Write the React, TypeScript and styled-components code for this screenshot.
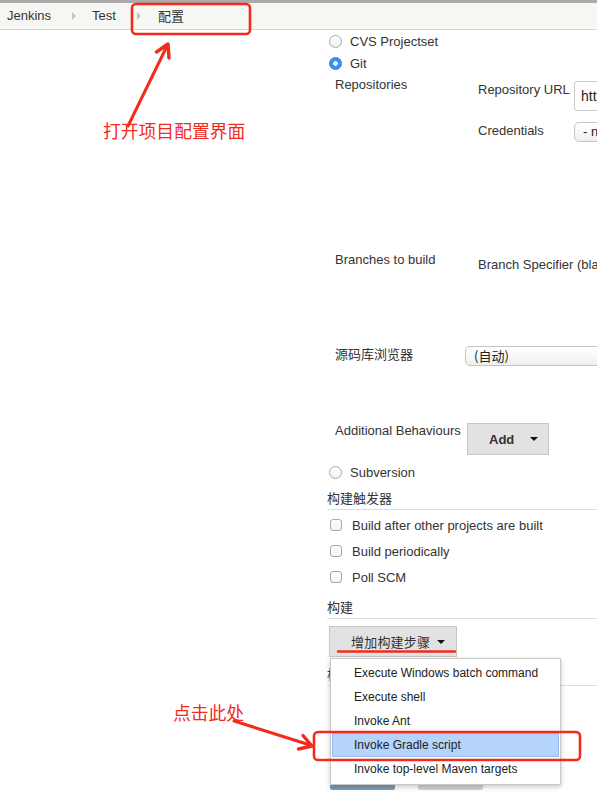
import React from 'react';
import styled, { createGlobalStyle, css } from 'styled-components';

const GlobalStyle = createGlobalStyle`
  html, body {
    margin: 0;
    padding: 0;
    background: #fff;
    overflow: hidden;
  }
  body {
    font-family: 'Liberation Sans', Arial, 'Noto Sans CJK SC', sans-serif;
    font-size: 13px;
    color: #333;
  }
`;

const RED = '#f22b1c';

const Page = styled.div`
  position: relative;
  width: 597px;
  height: 803px;
  overflow: hidden;
`;

const Breadcrumbs = styled.div`
  display: flex;
  align-items: center;
  height: 26px;
  padding-left: 7px;
  border-top: 3px solid #ababab;
  border-bottom: 1px solid #d4d5cf;
  background: #f6f7f2;
  line-height: 16px;
`;

const Crumb = styled.span<{ $cjk?: boolean }>`
  color: #333;
  margin-right: 21px;
  ${({ $cjk }) =>
    $cjk &&
    css`
      margin-left: 1px;
      font-family: 'Noto Sans CJK SC', sans-serif;
    `}
`;

const CrumbSep = styled.span`
  width: 0;
  height: 0;
  margin-right: 16px;
  border-top: 4px solid transparent;
  border-bottom: 4px solid transparent;
  border-left: 4px solid #c4c4c4;
`;

const Main = styled.div`
  display: flex;
`;

const Side = styled.div`
  flex: 0 0 327px;
`;

const Form = styled.div`
  flex: 0 0 600px;
`;

const RadioRow = styled.div<{ $mt?: number }>`
  display: flex;
  align-items: center;
  height: 22px;
  margin-top: ${({ $mt }) => $mt ?? 0}px;
  padding-left: 2px;
`;

const Radio = styled.span<{ $checked?: boolean }>`
  box-sizing: border-box;
  width: 13px;
  height: 13px;
  margin-right: 8px;
  border-radius: 50%;
  ${({ $checked }) =>
    $checked
      ? css`
          background: radial-gradient(circle, #fff 0 2px, #3b8ef5 2.6px);
          border: 1px solid #2f7fe6;
        `
      : css`
          background: linear-gradient(#fff, #f1f1f1);
          border: 1px solid #a9a9a9;
        `}
`;

const GitBlock = styled.div`
  padding-left: 8px;
`;

const SubRow = styled.div<{ $labelWidth: number; $height: number; $mt?: number }>`
  display: grid;
  grid-template-columns: ${({ $labelWidth }) => $labelWidth}px 1fr;
  align-items: start;
  height: ${({ $height }) => $height}px;
  margin-top: ${({ $mt }) => $mt ?? 0}px;
`;

const Label = styled.div<{ $pt?: number }>`
  padding-top: ${({ $pt }) => $pt ?? 0}px;
  line-height: 15px;
  white-space: nowrap;
  color: #333;
`;

const CjkLabel = styled(Label)`
  line-height: 16px;
  font-family: 'Noto Sans CJK SC', sans-serif;
`;

const FieldGrid = styled.div`
  display: grid;
  grid-template-columns: 96px 1fr;
  row-gap: 11px;
  margin-top: 7px;
`;

const TextInput = styled.div`
  box-sizing: border-box;
  width: 300px;
  height: 30px;
  padding: 0 6px;
  border: 1px solid #cacaca;
  border-radius: 3px;
  line-height: 28px;
  font-size: 14px;
  color: #222;
  white-space: nowrap;
  overflow: hidden;
`;

const SelectBox = styled.div<{ $cjk?: boolean }>`
  box-sizing: border-box;
  width: 300px;
  height: 20px;
  padding: 0 8px;
  border: 1px solid #c4c4c4;
  border-radius: 5px;
  background: linear-gradient(#ffffff, #f0f0f0);
  line-height: 18px;
  color: #222;
  white-space: nowrap;
  overflow: hidden;
  font-family: ${({ $cjk }) =>
    $cjk ? `'Noto Sans CJK SC', sans-serif` : `'Liberation Sans', Arial, sans-serif`};
`;

const DropButton = styled.div<{ $width: number; $height: number }>`
  box-sizing: border-box;
  display: flex;
  align-items: center;
  justify-content: space-between;
  width: ${({ $width }) => $width}px;
  height: ${({ $height }) => $height}px;
  border: 1px solid #c6c6c6;
  background: #e2e2e2;
  color: #333;
`;

const AddText = styled.span`
  margin-left: 21px;
  font-weight: bold;
`;

const StepText = styled.span`
  margin-left: 21px;
  font-family: 'Noto Sans CJK SC', sans-serif;
  letter-spacing: 0.2px;
`;

const Caret = styled.span<{ $mr: number }>`
  width: 0;
  height: 0;
  margin-right: ${({ $mr }) => $mr}px;
  border-left: 4px solid transparent;
  border-right: 4px solid transparent;
  border-top: 4px solid #111;
`;

const SectionHeader = styled.div<{ $mt?: number }>`
  margin-top: ${({ $mt }) => $mt ?? 0}px;
  padding: 7px 0 3px;
  border-bottom: 1px solid #dedede;
  line-height: 16px;
  font-family: 'Noto Sans CJK SC', sans-serif;
  color: #333;
`;

const CheckList = styled.div`
  margin-top: 2px;
  margin-bottom: 2px;
`;

const CheckRow = styled.div`
  display: flex;
  align-items: center;
  height: 26px;
  padding-left: 3px;
`;

const Checkbox = styled.span`
  box-sizing: border-box;
  width: 12px;
  height: 12px;
  margin-right: 10px;
  border: 1px solid #a9a9a9;
  border-radius: 3px;
  background: linear-gradient(#fff, #f2f2f2);
`;

const StepWrap = styled.div`
  position: relative;
  margin-top: 7px;
  margin-left: 2px;
`;

const Menu = styled.div`
  position: absolute;
  top: 32px;
  left: 1px;
  z-index: 2;
  box-sizing: border-box;
  width: 231px;
  height: 127px;
  padding: 2px 1px 0;
  border: 1px solid #c9c9c9;
  background: #fff;
  box-shadow: 0 2px 5px rgba(0, 0, 0, 0.22);
`;

const MenuItem = styled.div<{ $active?: boolean }>`
  box-sizing: border-box;
  height: 24px;
  padding-left: 22px;
  line-height: 24px;
  font-size: 12px;
  color: #222;
  white-space: nowrap;
  ${({ $active }) =>
    $active &&
    css`
      background: #b5d4fb;
      border: 1px solid #97bdf0;
      line-height: 22px;
      padding-left: 21px;
    `}
`;

const BottomBar = styled.div`
  display: flex;
  gap: 23px;
  margin-top: 75px;
  padding-left: 3px;
`;

const FormButton = styled.div<{ $primary?: boolean }>`
  width: 65px;
  height: 29px;
  border-radius: 2px;
  background: ${({ $primary }) => ($primary ? '#7e9bb1' : '#d4d4d4')};
`;

const Overlay = styled.svg`
  position: absolute;
  inset: 0;
  z-index: 5;
  pointer-events: none;
`;

const Note = styled.div<{ $x: number; $y: number }>`
  position: absolute;
  z-index: 6;
  left: ${({ $x }) => $x}px;
  top: ${({ $y }) => $y}px;
  font-family: 'Noto Sans CJK SC', sans-serif;
  font-size: 17.8px;
  line-height: 20px;
  color: ${RED};
  white-space: nowrap;
`;

const menuItems = [
  'Execute Windows batch command',
  'Execute shell',
  'Invoke Ant',
  'Invoke Gradle script',
  'Invoke top-level Maven targets',
];

const triggers = ['Build after other projects are built', 'Build periodically', 'Poll SCM'];

const App: React.FC = () => {
  return (
    <Page>
      <GlobalStyle />
      <Breadcrumbs>
        <Crumb>Jenkins</Crumb>
        <CrumbSep />
        <Crumb>Test</Crumb>
        <CrumbSep />
        <Crumb $cjk>配置</Crumb>
      </Breadcrumbs>

      <Main>
        <Side />
        <Form>
          <RadioRow>
            <Radio />
            CVS Projectset
          </RadioRow>
          <RadioRow>
            <Radio $checked />
            Git
          </RadioRow>

          <GitBlock>
            <SubRow $labelWidth={143} $height={178}>
              <Label $pt={3}>Repositories</Label>
              <FieldGrid>
                <Label $pt={1}>Repository URL</Label>
                <TextInput>https://github.com/</TextInput>
                <Label $pt={1}>Credentials</Label>
                <SelectBox>- none -</SelectBox>
              </FieldGrid>
            </SubRow>

            <SubRow $labelWidth={143} $height={94}>
              <Label>Branches to build</Label>
              <Label $pt={5}>Branch Specifier (blank for 'any')</Label>
            </SubRow>

            <SubRow $labelWidth={130} $height={20}>
              <CjkLabel>源码库浏览器</CjkLabel>
              <SelectBox $cjk>(自动)</SelectBox>
            </SubRow>

            <SubRow $labelWidth={132} $height={32} $mt={57}>
              <Label>Additional Behaviours</Label>
              <DropButton $width={82} $height={32}>
                <AddText>Add</AddText>
                <Caret $mr={10} />
              </DropButton>
            </SubRow>
          </GitBlock>

          <RadioRow $mt={6}>
            <Radio />
            Subversion
          </RadioRow>

          <SectionHeader>构建触发器</SectionHeader>
          <CheckList>
            {triggers.map((t) => (
              <CheckRow key={t}>
                <Checkbox />
                {t}
              </CheckRow>
            ))}
          </CheckList>

          <SectionHeader>构建</SectionHeader>
          <StepWrap>
            <DropButton $width={128} $height={31}>
              <StepText>增加构建步骤</StepText>
              <Caret $mr={11} />
            </DropButton>
            <Menu>
              {menuItems.map((m) => (
                <MenuItem key={m} $active={m === 'Invoke Gradle script'}>
                  {m}
                </MenuItem>
              ))}
            </Menu>
          </StepWrap>

          <SectionHeader $mt={2}>构建后操作</SectionHeader>
          <BottomBar>
            <FormButton $primary />
            <FormButton />
          </BottomBar>
        </Form>
      </Main>

      <Overlay width={597} height={803} viewBox="0 0 597 803">
        <g fill="none" stroke={RED} strokeLinecap="round" strokeLinejoin="round">
          <rect x={132} y={4} width={118} height={30} rx={4} strokeWidth={2.6} />
          <rect x={314} y={732} width={266} height={28} rx={4} strokeWidth={2.6} />
          <line x1={338} y1={651.5} x2={455} y2={651.5} strokeWidth={2.4} />
          <line x1={128} y1={126} x2={167} y2={46} strokeWidth={3} />
          <polyline points="156.5,52 168,44 169,58" strokeWidth={3.4} />
          <line x1={234} y1={721} x2={310} y2={745} strokeWidth={3} />
          <polyline points="303,735.5 312,746 298.5,749" strokeWidth={3.4} />
        </g>
      </Overlay>
      <Note $x={103} $y={120}>打开项目配置界面</Note>
      <Note $x={173} $y={702}>点击此处</Note>
    </Page>
  );
};

export default App;
